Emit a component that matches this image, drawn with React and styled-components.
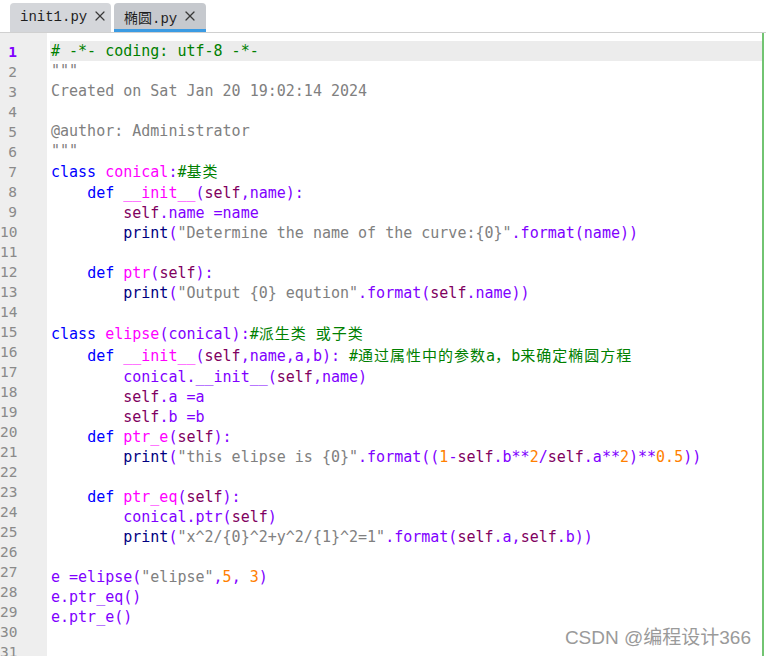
import React from "react";
import styled, { createGlobalStyle } from "styled-components";
import { X } from "lucide-react";

const GlobalStyle = createGlobalStyle`
  html, body {
    margin: 0;
    padding: 0;
    background: #fff;
  }
  body {
    width: 766px;
    height: 656px;
    overflow: hidden;
  }
`;

const Window = styled.div`
  position: relative;
  width: 766px;
  height: 656px;
  display: flex;
  flex-direction: column;
  background: #fff;
  overflow: hidden;
`;

const TabBar = styled.div`
  display: flex;
  align-items: flex-end;
  gap: 3px;
  height: 33px;
  flex-shrink: 0;
  padding-left: 10px;
  border-bottom: 1px solid #d0d0d0;
  box-sizing: border-box;
`;

const Tab = styled.div`
  display: flex;
  align-items: center;
  gap: 5px;
  height: 29px;
  width: ${(p) => p.width}px;
  padding: 0 8px 0 10px;
  box-sizing: border-box;
  background: ${(p) => (p.active ? "#c6c9ce" : "#d4d6da")};
  border-radius: 4px 4px 0 0;
  border-bottom: 3px solid ${(p) => (p.active ? "#3b9be3" : "transparent")};
  font-family: "Liberation Mono", "Noto Sans CJK SC", monospace;
  font-size: 14px;
  color: #1e1e1e;

  svg {
    flex-shrink: 0;
  }
`;

const TabLabel = styled.span`
  flex: 1;
  white-space: nowrap;
  padding-top: 2px;
`;

const Editor = styled.div`
  flex: 1;
  display: flex;
  min-height: 0;
`;

const Gutter = styled.div`
  width: 47px;
  background: #eeeeee;
  padding-top: 9px;
  box-sizing: border-box;
  font-family: "DejaVu Sans Mono", "Liberation Mono", monospace;
  font-size: 14.5px;
`;

const LineNo = styled.div`
  height: 20px;
  line-height: 20px;
  width: 17px;
  text-align: right;
  color: ${(p) => (p.current ? "#8000ff" : "#8a8a8a")};
  font-weight: ${(p) => (p.current ? "bold" : "normal")};
`;

const Code = styled.div`
  flex: 1;
  margin-left: 3px;
  padding-top: 8px;
  border-right: 2px solid #72c472;
  margin-right: 2px;
  font-family: "DejaVu Sans Mono", "Noto Sans CJK SC", monospace;
  font-size: 15px;
`;

// lines holding CJK glyphs come out a little taller in this editor
const Line = styled.div`
  height: ${(p) => (p.tall ? 22 : 20)}px;
  line-height: ${(p) => (p.tall ? 22 : 20)}px;
  padding-left: 1px;
  white-space: pre;
  background: ${(p) => (p.current ? "#ececec" : "transparent")};
`;

const colors = {
  kw: "#0000ff",
  def: "#ff00ff",
  self: "#800060",
  op: "#8000ff",
  fn: "#000080",
  str: "#808080",
  cmt: "#008000",
  num: "#ff8000",
};

const Tok = styled.span`
  color: ${(p) => colors[p.kind]};
`;

const Wide = styled.span`
  letter-spacing: 1px;
`;

const Watermark = styled.div`
  position: absolute;
  right: 15px;
  bottom: 7px;
  font-family: "Liberation Sans", "Noto Sans CJK SC", sans-serif;
  font-size: 19px;
  color: #9a9a9a;
  text-shadow: 0 0 2px #fff, 0 0 2px #fff;
`;

const I = "    ";
const II = "        ";

const lines = [
  [["cmt", "# -*- coding: utf-8 -*-"]],
  [["str", '"""']],
  [["str", "Created on Sat Jan 20 19:02:14 2024"]],
  [],
  [["str", "@author: Administrator"]],
  [["str", '"""']],
  [["kw", "class"], ["op", " "], ["def", "conical"], ["op", ":"], ["cmt", "#基类"]],
  [["op", I], ["kw", "def"], ["op", " "], ["def", "__init__"], ["op", "("], ["self", "self"], ["op", ",name):"]],
  [["op", II], ["self", "self"], ["op", ".name =name"]],
  [["op", II], ["fn", "print"], ["op", "("], ["str", '"Determine the name of the curve:{0}"'], ["op", ".format(name))"]],
  [],
  [["op", I], ["kw", "def"], ["op", " "], ["def", "ptr"], ["op", "("], ["self", "self"], ["op", "):"]],
  [["op", II], ["fn", "print"], ["op", "("], ["str", '"Output {0} eqution"'], ["op", ".format("], ["self", "self"], ["op", ".name))"]],
  [],
  [["kw", "class"], ["op", " "], ["def", "elipse"], ["op", "(conical):"], ["cmt", "#派生类 或子类"]],
  [["op", I], ["kw", "def"], ["op", " "], ["def", "__init__"], ["op", "("], ["self", "self"], ["op", ",name,a,b): "], ["cmt", "#通过属性中的参数a，b来确定椭圆方程"]],
  [["op", II + "conical.__init__("], ["self", "self"], ["op", ",name)"]],
  [["op", II], ["self", "self"], ["op", ".a =a"]],
  [["op", II], ["self", "self"], ["op", ".b =b"]],
  [["op", I], ["kw", "def"], ["op", " "], ["def", "ptr_e"], ["op", "("], ["self", "self"], ["op", "):"]],
  [
    ["op", II], ["fn", "print"], ["op", "("], ["str", '"this elipse is {0}"'], ["op", ".format(("],
    ["num", "1"], ["op", "-"], ["self", "self"], ["op", ".b**"], ["num", "2"], ["op", "/"], ["self", "self"],
    ["op", ".a**"], ["num", "2"], ["op", ")**"], ["num", "0.5"], ["op", "))"],
  ],
  [],
  [["op", I], ["kw", "def"], ["op", " "], ["def", "ptr_eq"], ["op", "("], ["self", "self"], ["op", "):"]],
  [["op", II + "conical.ptr("], ["self", "self"], ["op", ")"]],
  [
    ["op", II], ["fn", "print"], ["op", "("], ["str", '"x^2/{0}^2+y^2/{1}^2=1"'], ["op", ".format("],
    ["self", "self"], ["op", ".a,"], ["self", "self"], ["op", ".b))"],
  ],
  [],
  [["op", "e =elipse("], ["str", '"elipse"'], ["op", ","], ["num", "5"], ["op", ", "], ["num", "3"], ["op", ")"]],
  [["op", "e.ptr_eq()"]],
  [["op", "e.ptr_e()"]],
  [],
  [],
];

const CJK = /[\u3000-\u9fff\uff00-\uffef]/;

// CJK runs get a little extra room, like the editor's wide glyphs
const renderText = (text) =>
  text.split(/([\u3000-\u9fff\uff00-\uffef]+)/).map((part, i) =>
    CJK.test(part) ? <Wide key={i}>{part}</Wide> : part
  );

const App = () => {
  return (
    <Window>
      <GlobalStyle />
      <TabBar>
        <Tab width={101}>
          <TabLabel>init1.py</TabLabel>
          <X size={16} strokeWidth={1.8} color="#3a3a3a" />
        </Tab>
        <Tab width={92} active>
          <TabLabel>椭圆.py</TabLabel>
          <X size={16} strokeWidth={1.8} color="#3a3a3a" />
        </Tab>
      </TabBar>
      <Editor>
        <Gutter>
          {lines.map((_, idx) => (
            <LineNo key={`no-${idx}`} current={idx === 0}>
              {idx + 1}
            </LineNo>
          ))}
        </Gutter>
        <Code>
          {lines.map((toks, idx) => (
            <Line
              key={`line-${idx}`}
              current={idx === 0}
              tall={toks.some(([, text]) => CJK.test(text))}
            >
              {toks.map(([kind, text], j) => (
                <Tok key={j} kind={kind}>
                  {renderText(text)}
                </Tok>
              ))}
            </Line>
          ))}
        </Code>
      </Editor>
      <Watermark>CSDN @编程设计366</Watermark>
    </Window>
  );
};

export default App;
